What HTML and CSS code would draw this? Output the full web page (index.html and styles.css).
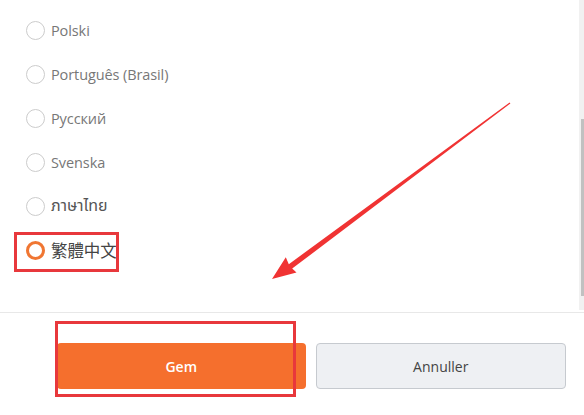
FILE: index.html
```html
<!DOCTYPE html>
<html>
<head>
<meta charset="utf-8">
<link rel="stylesheet" href="styles.css">
</head>
<body>
<div class="dialog">
  <div class="body">
    <ul class="list">
      <li class="row"><span class="radio"></span><span class="label">Polski</span></li>
      <li class="row"><span class="radio"></span><span class="label">Português (Brasil)</span></li>
      <li class="row"><span class="radio"></span><span class="label">Русский</span></li>
      <li class="row"><span class="radio"></span><span class="label">Svenska</span></li>
      <li class="row"><span class="radio"></span><span class="label thai">ภาษาไทย</span></li>
      <li class="row selected"><span class="radio on"></span><span class="label cjk">繁體中文</span><span class="mark-box"></span></li>
    </ul>
    <div class="scrollbar"><div class="track-gap"></div><div class="thumb"></div></div>
  </div>
  <div class="footer">
    <button class="btn primary">Gem<span class="mark-box btn-mark"></span></button>
    <button class="btn secondary">Annuller</button>
  </div>
  <svg class="arrow" width="584" height="415" viewBox="0 0 584 415">
    <polygon fill="#f03333" points="272,279 296.5,272.5 292.2,268.6 510.4,103.5 509.6,102.5 288.8,264.2 285.8,257.3"/>
  </svg>
</div>
</body>
</html>
```
FILE: styles.css
```css
* { box-sizing: border-box; }
html, body { margin: 0; padding: 0; background: #fff; }
body { font-family: "Open Sans", "Noto Sans", sans-serif; }
.dialog { position: relative; width: 584px; height: 415px; overflow: hidden; }
.body { display: flex; height: 312px; }
.list { list-style: none; margin: 0; padding: 8px 0 0 26px; flex: 1; }
.row { position: relative; display: flex; align-items: center; height: 44px; gap: 6px; }
.radio { width: 19px; height: 19px; border-radius: 50%; border: 1px solid #cccccc; background: #fff; flex: none; }
.radio.on { border: 3px solid #f07632; width: 19px; height: 19px; }
.label { font-size: 14.5px; color: #777; letter-spacing: -0.1px; }
.thai { font-family: "Noto Sans Thai", "DejaVu Sans", sans-serif; font-size: 16px; color: #555; }
.cjk { font-family: "Noto Sans CJK TC", sans-serif; font-size: 16.5px; color: #444; }
.mark-box { position: absolute; border: 3px solid #e8383c; pointer-events: none; }
.row .mark-box { left: -12px; top: 4px; width: 105px; height: 40px; }
.scrollbar { width: 5px; height: 310px; background: #f1f1f1; display: flex; flex-direction: column; align-items: flex-end; }
.track-gap { height: 119px; }
.thumb { width: 3px; height: 177px; background: #c1c1c1; }
.footer { border-top: 1px solid #e8e8e8; display: flex; gap: 10px; padding: 30px 18px 0 57px; }
.btn { position: relative; flex: 1; height: 46px; border-radius: 4px; font-family: "Open Sans", sans-serif; font-size: 14px; }
.primary { background: #f56f2d; color: #fff; border: none; font-weight: 600; }
.secondary { background: #eef0f3; color: #444; border: 1px solid #c6cacf; }
.btn-mark { left: -2px; top: -22px; width: 241px; height: 76px; }
.arrow { position: absolute; left: 0; top: 0; pointer-events: none; }
```
